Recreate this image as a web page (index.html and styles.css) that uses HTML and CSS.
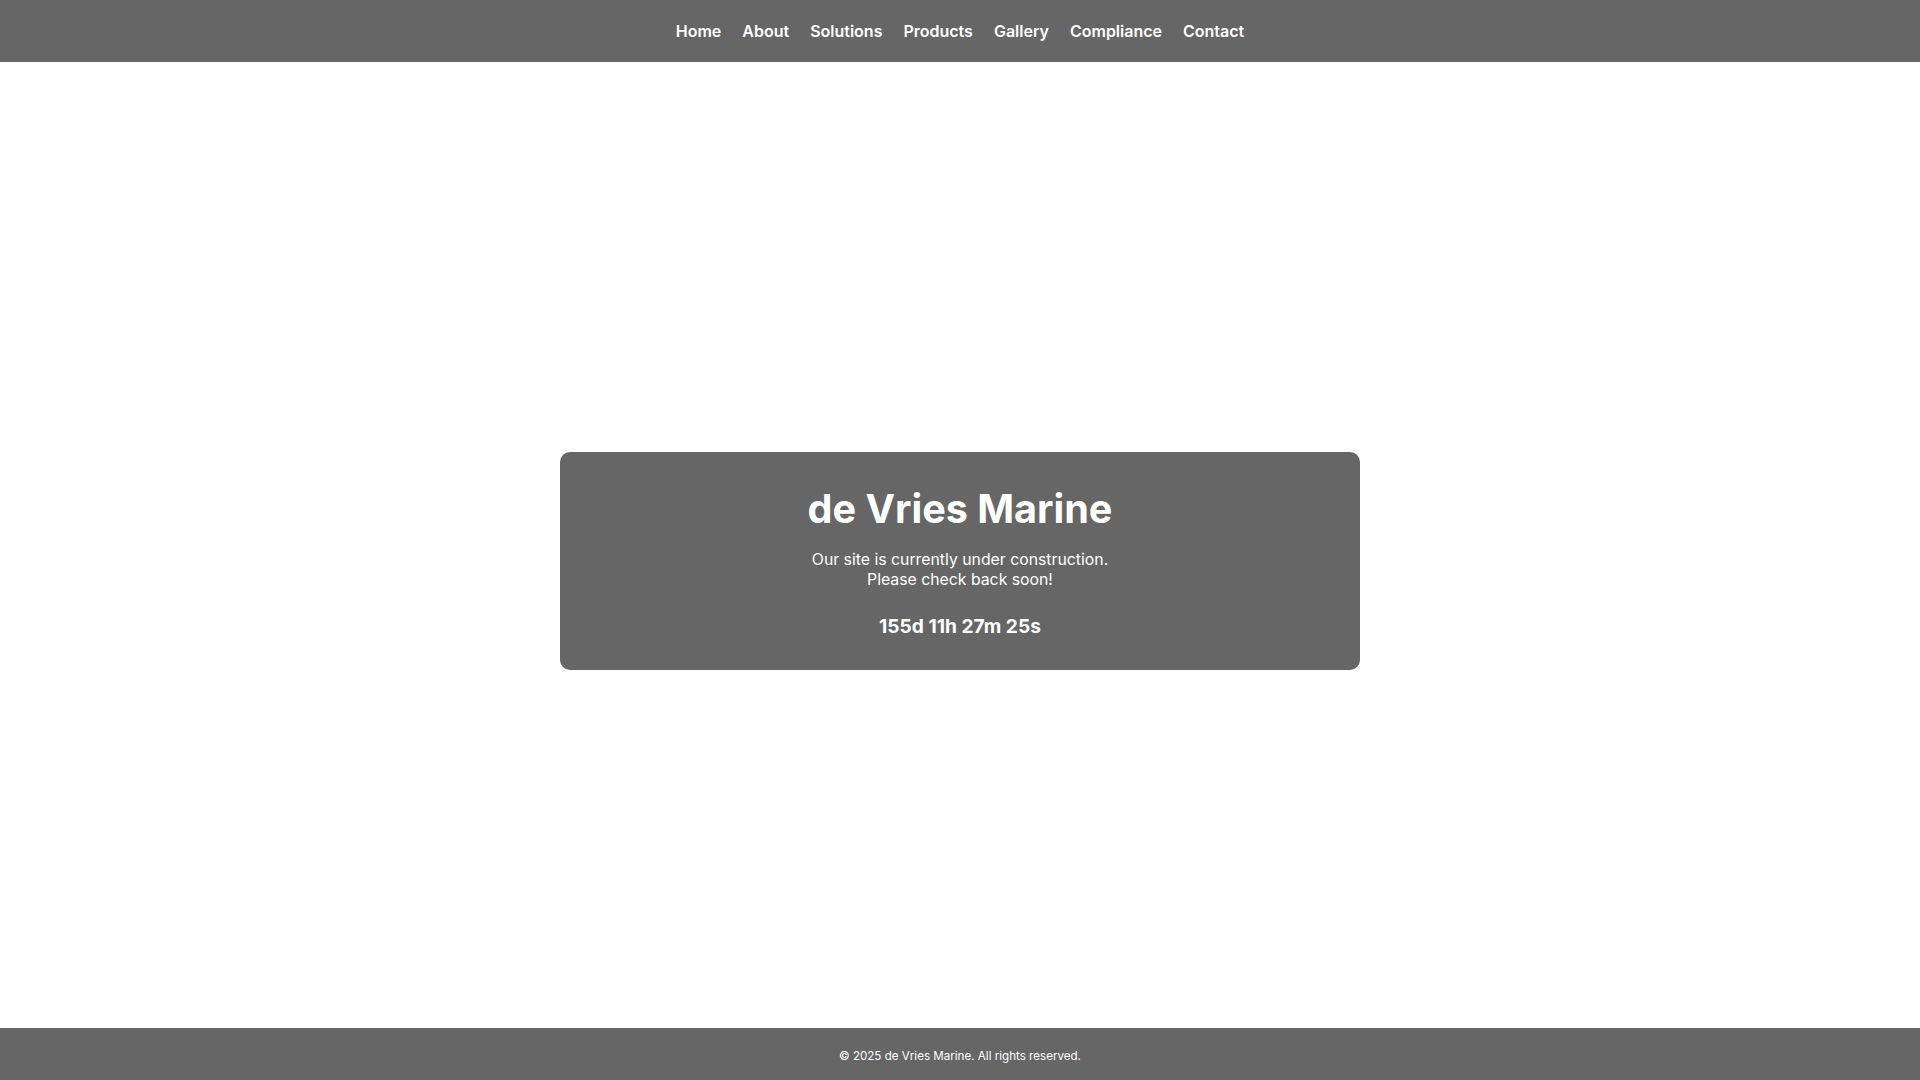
FILE: index.html
```html
<!DOCTYPE html>
<html lang="en">
<head>
<meta charset="utf-8">
<title>de Vries Marine</title>
<link rel="stylesheet" href="styles.css">
</head>
<body>
<header class="site-header">
  <nav class="nav">
    <a href="#">Home</a>
    <a href="#">About</a>
    <a href="#">Solutions</a>
    <a href="#">Products</a>
    <a href="#">Gallery</a>
    <a href="#">Compliance</a>
    <a href="#">Contact</a>
  </nav>
</header>
<main class="main">
  <section class="card">
    <h1 class="title">de Vries Marine</h1>
    <p class="message">Our site is currently under construction.<br>Please check back soon!</p>
    <div class="countdown">155d 11h 27m 25s</div>
  </section>
</main>
<footer class="site-footer">
  <p>© 2025 de Vries Marine. All rights reserved.</p>
</footer>
</body>
</html>
```

FILE: styles.css
```css
* { box-sizing: border-box; }
html, body { height: 100%; }
body {
  margin: 0;
  font-family: Inter, "Noto Sans", sans-serif;
  color: #fff;
  background: #fff;
  display: flex;
  flex-direction: column;
  min-height: 100vh;
}
.site-header {
  background: #666666;
  height: 62px;
  display: flex;
  align-items: center;
  justify-content: center;
}
.nav {
  display: flex;
  gap: 21px;
}
.nav a {
  color: #fff;
  text-decoration: none;
  font-weight: 600;
  font-size: 16px;
  line-height: 24px;
}
.main {
  flex: 1;
  display: flex;
  align-items: center;
  justify-content: center;
  padding-top: 32px;
}
.card {
  width: 800px;
  background: #666666;
  border-radius: 10px;
  padding: 32px 32px 32px;
  text-align: center;
}
.title {
  margin: 1px 0 17px;
  font-size: 39.6px;
  line-height: 48px;
  font-weight: 700;
}
.message {
  margin: 0;
  font-size: 15.8px;
  line-height: 20px;
}
.countdown {
  margin-top: 24px;
  font-size: 19.2px;
  line-height: 24px;
  font-weight: 700;
}
.site-footer {
  background: #666666;
  height: 52px;
  display: flex;
  align-items: center;
  justify-content: center;
  padding-top: 3px;
}
.site-footer p {
  margin: 0;
  font-size: 11.6px;
}
```
